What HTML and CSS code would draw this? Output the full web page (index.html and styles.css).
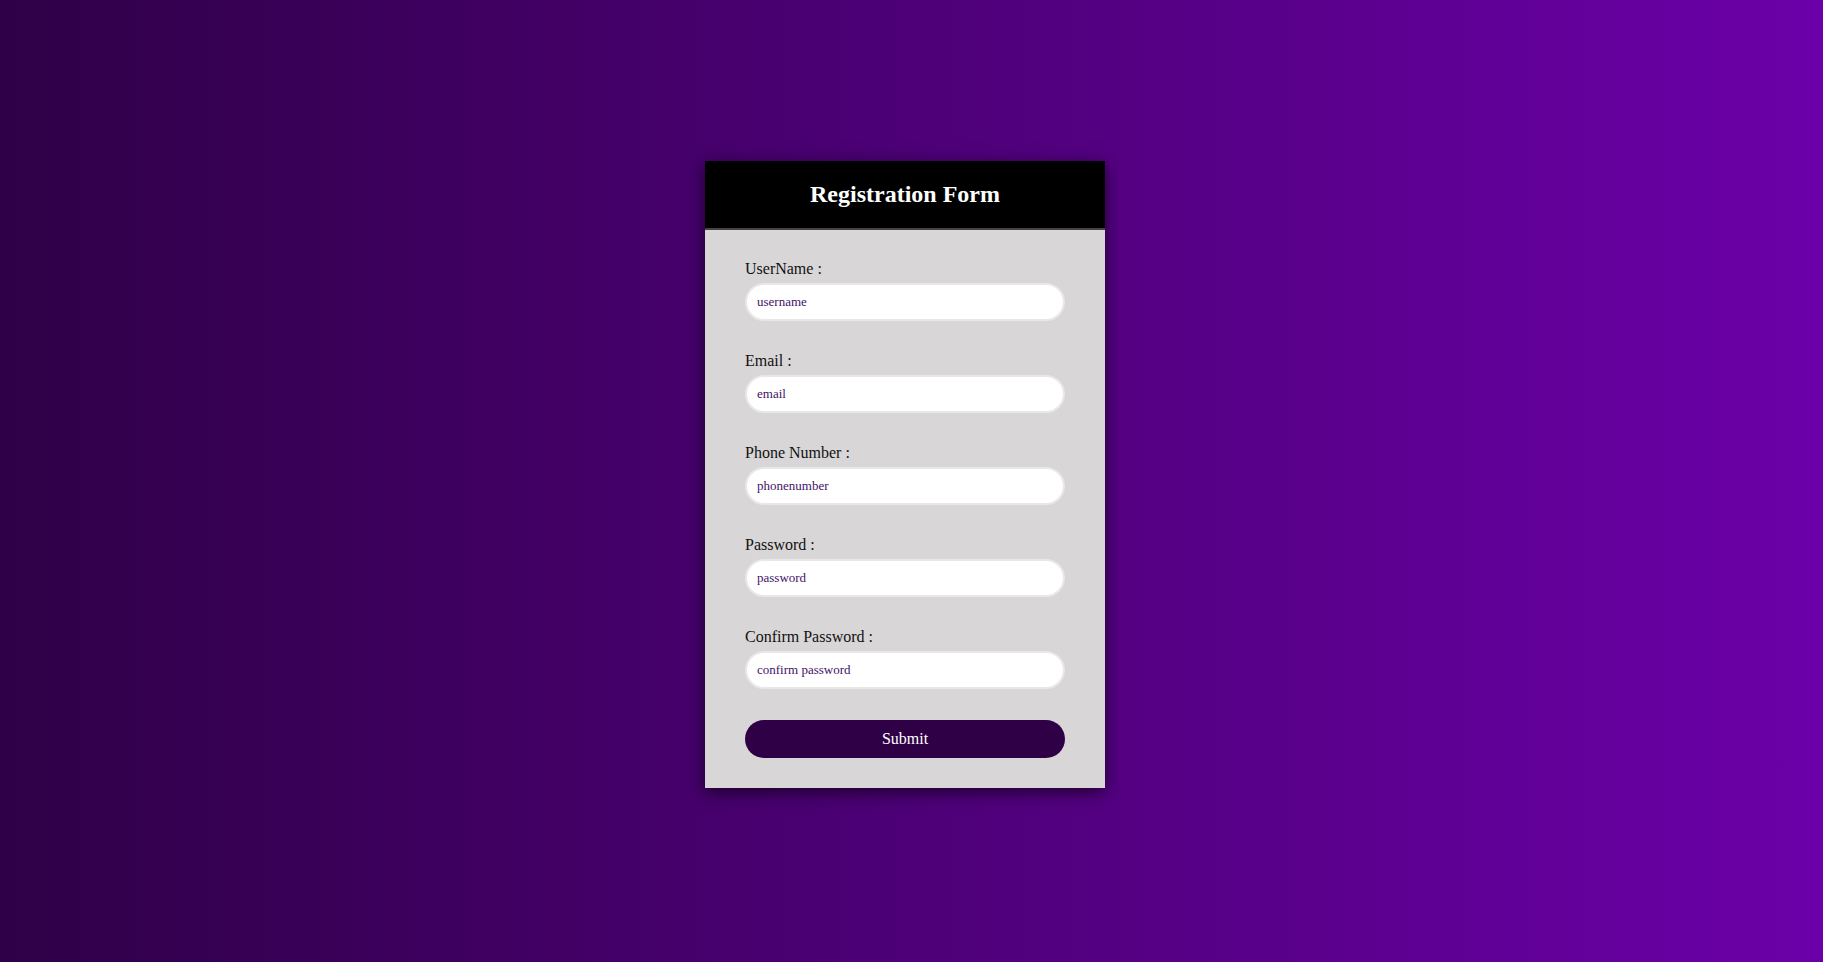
FILE: index.html
```html
<!DOCTYPE html>
<html lang="en">
<head>
<meta charset="utf-8">
<title>Registration Form</title>
<link rel="stylesheet" href="styles.css">
</head>
<body>
<div class="page">
  <form class="card">
    <div class="card-header">
      <h2 class="title">Registration Form</h2>
    </div>
    <div class="card-body">
      <div class="field">
        <label class="label">UserName :</label>
        <input class="input" type="text" placeholder="username">
      </div>
      <div class="field">
        <label class="label">Email :</label>
        <input class="input" type="text" placeholder="email">
      </div>
      <div class="field">
        <label class="label">Phone Number :</label>
        <input class="input" type="text" placeholder="phonenumber">
      </div>
      <div class="field">
        <label class="label">Password :</label>
        <input class="input" type="text" placeholder="password">
      </div>
      <div class="field field-last">
        <label class="label">Confirm Password :</label>
        <input class="input" type="text" placeholder="confirm password">
      </div>
      <button class="submit" type="button">Submit</button>
    </div>
  </form>
</div>
</body>
</html>
```

FILE: styles.css
```css
html, body {
  margin: 0;
  padding: 0;
}
body {
  font-family: "Liberation Serif", "Times New Roman", serif;
  background: linear-gradient(to right, #2f0047, #6b00a8);
  min-height: 100vh;
}
.page {
  min-height: 100vh;
  box-sizing: border-box;
  display: flex;
  align-items: center;
  justify-content: center;
  padding: 0 13px 13px 0;
}
.card {
  width: 400px;
  margin: 0;
  background: #d8d6d7;
  box-shadow: 0 4px 16px rgba(0, 0, 0, 0.65);
}
.card-header {
  background: #000;
  border-bottom: 2px solid #444;
  padding: 20px 0;
  text-align: center;
}
.title {
  margin: 0;
  font-size: 24px;
  line-height: 27px;
  font-weight: bold;
  color: #fff;
}
.card-body {
  padding: 30px 40px 30px;
  display: flex;
  flex-direction: column;
}
.field {
  display: flex;
  flex-direction: column;
  margin-bottom: 31px;
}
.field-last {
  margin-bottom: 31px;
}
.label {
  font-size: 16px;
  line-height: 18px;
  color: #111;
  margin-bottom: 5px;
}
.input {
  box-sizing: border-box;
  height: 38px;
  width: 100%;
  border: 2px solid #e9e7e8;
  border-radius: 20px;
  background: #fff;
  padding: 0 10px;
  font-family: "Liberation Serif", "Times New Roman", serif;
  font-size: 13px;
  color: #3d1465;
  outline: none;
}
.input::placeholder {
  color: #3f1268;
  opacity: 1;
}
.submit {
  box-sizing: border-box;
  height: 38px;
  width: 100%;
  border: none;
  border-radius: 20px;
  background: #300046;
  color: #fff;
  font-family: "Liberation Serif", "Times New Roman", serif;
  font-size: 16px;
  cursor: pointer;
}
```
